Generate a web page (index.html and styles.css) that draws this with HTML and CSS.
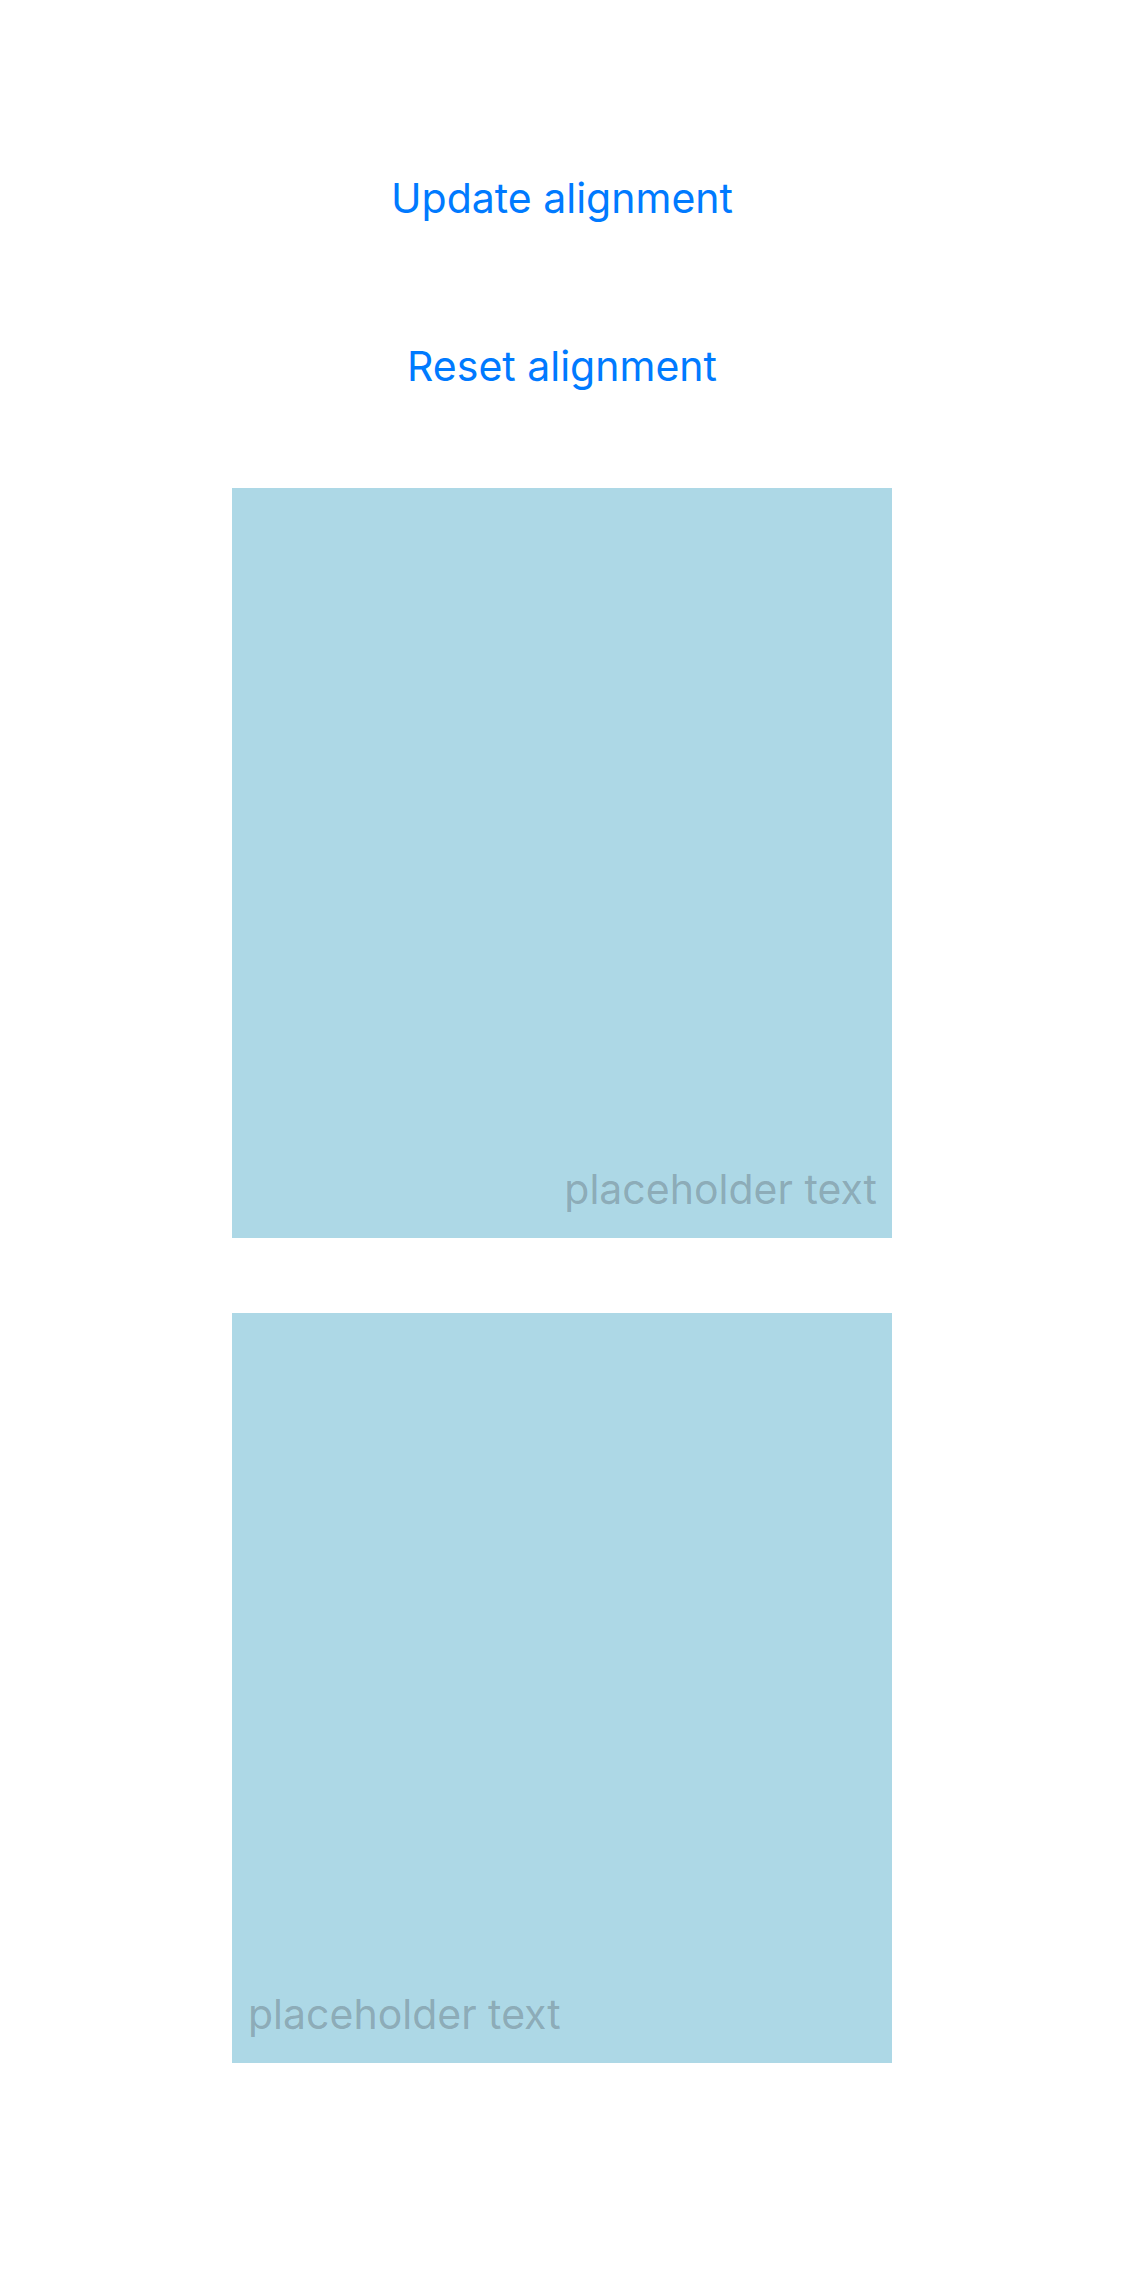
FILE: index.html
```html
<!DOCTYPE html>
<html>
<head>
<meta charset="utf-8">
<link rel="stylesheet" href="styles.css">
</head>
<body>
<main class="page">
  <div class="actions">
    <div class="btn">Update alignment</div>
    <div class="btn">Reset alignment</div>
  </div>
  <div class="panel panel-end">
    <span class="placeholder">placeholder text</span>
  </div>
  <div class="panel panel-start">
    <span class="placeholder">placeholder text</span>
  </div>
</main>
</body>
</html>
```
FILE: styles.css
```css
html, body {
  margin: 0;
  padding: 0;
  background: #ffffff;
}
body {
  font-family: Inter, "Noto Sans", "Liberation Sans", sans-serif;
}
.page {
  width: 1124px;
  min-height: 2286px;
  display: flex;
  flex-direction: column;
  align-items: center;
  padding-top: 174px;
  box-sizing: border-box;
}
.actions {
  display: flex;
  flex-direction: column;
  align-items: center;
  gap: 120px;
}
.btn {
  font-size: 41px;
  line-height: 48px;
  color: #007aff;
}
.panel {
  width: 660px;
  height: 750px;
  background: #add8e6;
  display: flex;
  flex-direction: column;
  justify-content: flex-end;
  box-sizing: border-box;
  padding: 0 15px 25px 16px;
}
.actions + .panel {
  margin-top: 98px;
}
.panel + .panel {
  margin-top: 75px;
}
.panel-end {
  align-items: flex-end;
}
.panel-start {
  align-items: flex-start;
}
.placeholder {
  font-size: 41px;
  line-height: 48px;
  color: rgba(60, 60, 67, 0.3);
}
```
